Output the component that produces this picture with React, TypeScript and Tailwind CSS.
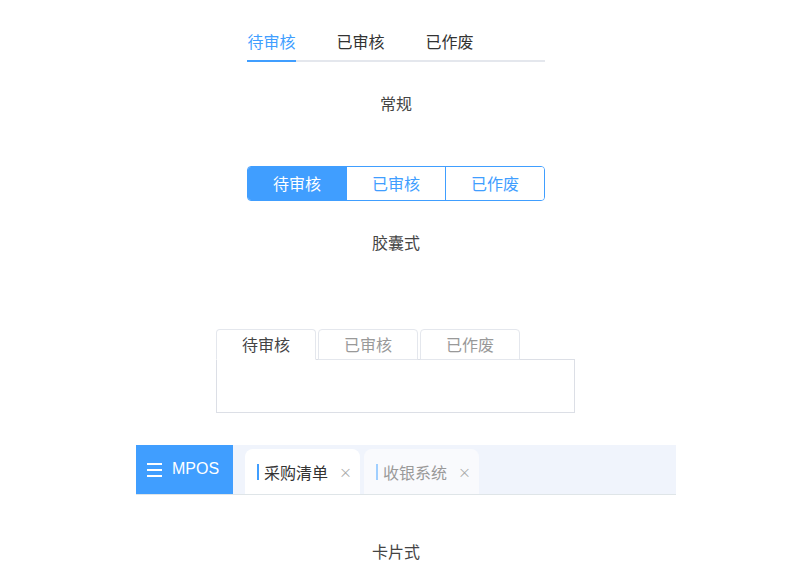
import React, { useState } from "react";

const font = { fontFamily: '"Noto Sans CJK SC", "Noto Sans", sans-serif' };

const tabs = ["待审核", "已审核", "已作废"];

// 常规 tabs
const PlainTabs = () => {
  const [active, setActive] = useState(0);
  return (
    <div className="flex w-[298px] gap-[40px] border-b-2 border-[#e4e7ed]">
      {tabs.map((t, i) => (
        <button
          key={t}
          onClick={() => setActive(i)}
          className={
            "-mb-[2px] w-[49px] border-b-2 pb-[7px] text-center text-[16px] leading-[24px] " +
            (active === i
              ? "border-[#409eff] text-[#409eff]"
              : "border-transparent text-[#333]")
          }
        >
          {t}
        </button>
      ))}
    </div>
  );
};

// 胶囊式 tabs
const CapsuleTabs = () => {
  const [active, setActive] = useState(0);
  return (
    <div className="flex h-[35px] w-[298px] overflow-hidden rounded-[4px] border border-[#409eff]">
      {tabs.map((t, i) => (
        <button
          key={t}
          onClick={() => setActive(i)}
          className={
            "flex-1 pb-px text-[16px] " +
            (i > 0 ? "border-l border-[#409eff] " : "") +
            (active === i ? "bg-[#409eff] text-white" : "bg-white text-[#409eff]")
          }
        >
          {t}
        </button>
      ))}
    </div>
  );
};

// 卡片式 tabs (bordered box)
const CardTabs = () => {
  const [active, setActive] = useState(0);
  return (
    <div className="w-[360px]">
      <div className="flex gap-[2px]">
        {tabs.map((t, i) => (
          <button
            key={t}
            onClick={() => setActive(i)}
            className={
              "relative z-10 h-[31px] w-[100px] rounded-t-[4px] border border-[#e4e7ed] text-[16px] leading-[27px] " +
              (active === i
                ? "border-b-white bg-white text-[#444]"
                : "h-[30px] self-start text-[#999]")
            }
          >
            {t}
          </button>
        ))}
      </div>
      <div className="-mt-px h-[54px] w-[359px] border border-[#dcdfe6]" />
    </div>
  );
};

const NavBar = () => {
  const [active, setActive] = useState(0);
  const items = ["采购清单", "收银系统"];
  return (
    <div className="ml-[136px] flex h-[50px] w-[540px] self-start border-b border-[#dfe5e8] bg-[#f0f4fc]">
      <div className="flex h-[49px] w-[97px] items-center gap-[10px] bg-[#409eff] pl-[11px] text-white">
        <svg width="15" height="14" viewBox="0 0 15 14">
          <rect x="0" y="0" width="15" height="2" fill="white" />
          <rect x="0" y="6" width="15" height="2" fill="white" />
          <rect x="0" y="12" width="15" height="2" fill="white" />
        </svg>
        <span className="pb-px text-[16px]" style={{ fontFamily: '"Liberation Sans", Arial, sans-serif' }}>
          MPOS
        </span>
      </div>
      <div className="ml-[12px] flex items-end gap-[4px]">
        {items.map((t, i) => (
          <div
            key={t}
            onClick={() => setActive(i)}
            className={
              "flex h-[45px] w-[115px] cursor-pointer items-center rounded-t-[8px] pl-[12px] " +
              (active === i ? "bg-white" : "bg-[#f9fafd]")
            }
          >
            <span
              className={
                "h-[16px] w-[2px] " + (active === i ? "bg-[#409eff]" : "bg-[#a0cfff]")
              }
            />
            <span
              className={
                "ml-[5px] text-[16px] " + (active === i ? "text-[#333]" : "text-[#999]")
              }
            >
              {t}
            </span>
            <span className="ml-[11px] text-[13px] text-[#aaa]">×</span>
          </div>
        ))}
      </div>
    </div>
  );
};

const Label = ({ children, className }: { children: string; className: string }) => (
  <div className={"text-[16px] leading-[24px] text-[#444] " + className}>{children}</div>
);

export default function App() {
  return (
    <div className="min-h-[585px] w-[800px] bg-white" style={font}>
      <div className="flex w-[792px] flex-col items-center pt-[29px]">
        <PlainTabs />
        <Label className="mt-[29px]">常规</Label>
        <div className="mt-[51px]">
          <CapsuleTabs />
        </div>
        <Label className="mt-[29px]">胶囊式</Label>
        <div className="mt-[75px]">
          <CardTabs />
        </div>
        <div className="mt-[32px] w-full">
          <NavBar />
        </div>
        <Label className="mt-[44px]">卡片式</Label>
      </div>
    </div>
  );
}
